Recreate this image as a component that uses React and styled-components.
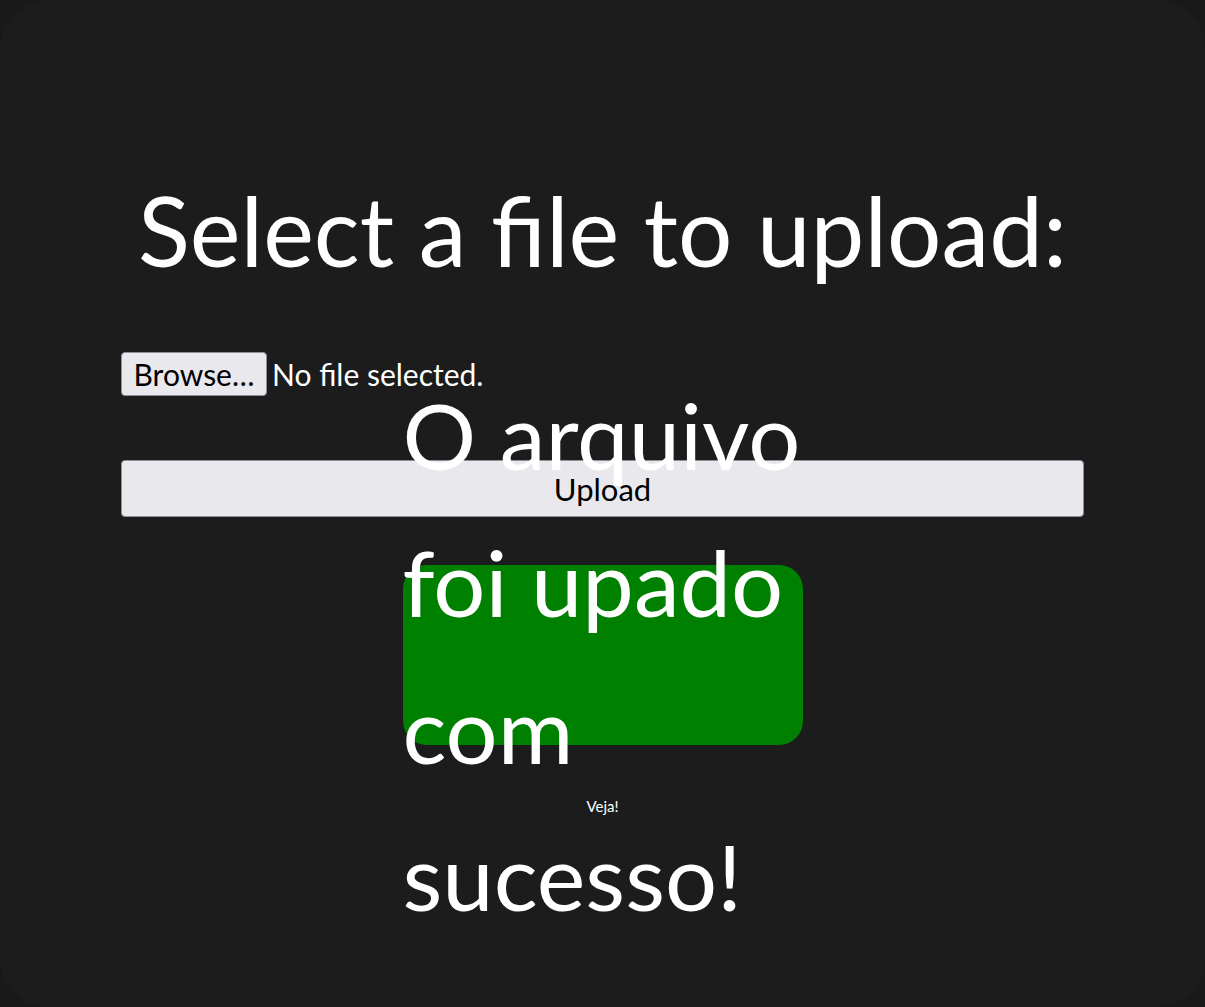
import React from 'react';
import styled, {createGlobalStyle} from 'styled-components';

const GlobalStyle = createGlobalStyle`
html, body {
    margin: 0;
    padding: 0;
    background: #191919;
}
body {
    font-family: Lato, "Noto Sans", sans-serif;
    color: #ffffff;
}
`

const Frame = styled.div`
min-height: 1007px;
box-sizing: border-box;
background: #1c1c1c;
border-radius: 48px;
padding: 170px 121px 0;
display: flex;
flex-direction: column;
align-items: center;
overflow: hidden;
`

const Title = styled.h1`
margin: 0;
font-size: 96px;
line-height: 120px;
font-weight: 400;
text-align: center;
white-space: nowrap;
`

const UploadForm = styled.form`
align-self: stretch;
display: flex;
flex-direction: column;
margin-top: 62px;
`

const FileRow = styled.label`
display: flex;
align-items: center;
gap: 5px;
font-size: 30px;
height: 44px;
cursor: pointer;
`

const HiddenInput = styled.input`
display: none;
`

const Browse = styled.span`
display: flex;
align-items: center;
justify-content: center;
box-sizing: border-box;
width: 146px;
height: 44px;
background: #e9e8ed;
color: #000;
border: 1px solid #8f8f9d;
border-radius: 4px;
`

const SubmitButton = styled.button`
margin-top: 64px;
height: 57px;
background: #e9e8ed;
color: #000;
border: 1px solid #8f8f9d;
border-radius: 4px;
font-family: inherit;
font-size: 31px;
`

const Success = styled.div`
margin-top: 48px;
width: 400px;
height: 180px;
background: #008000;
border-radius: 24px;
display: flex;
align-items: center;
font-size: 92px;
line-height: 147px;
`

const Note = styled.p`
margin: 52px 0 0;
font-size: 15px;
`

export default function App() {
    return (
        <>
            <GlobalStyle />
            <Frame>
                <Title>Select a file to upload:</Title>
                <UploadForm onSubmit={(e) => e.preventDefault()}>
                    <FileRow>
                        <HiddenInput type="file" />
                        <Browse>Browse…</Browse>
                        No file selected.
                    </FileRow>
                    <SubmitButton type="submit">Upload</SubmitButton>
                </UploadForm>
                <Success>
                    <span>O arquivo foi upado com sucesso!</span>
                </Success>
                <Note>Veja!</Note>
            </Frame>
        </>
    )
}
